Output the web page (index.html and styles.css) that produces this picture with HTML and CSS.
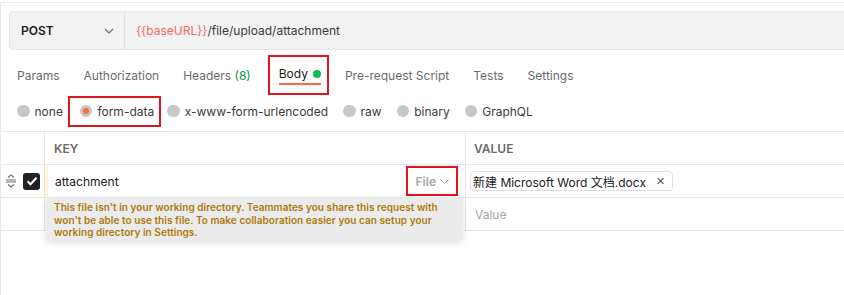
FILE: index.html
```html
<!DOCTYPE html>
<html>
<head>
	<meta charset="utf-8">
	<title>Request</title>
	<link rel="stylesheet" href="styles.css">
</head>
<body>
	<div class="app">
		<div class="url-bar">
			<div class="method">
				<span>POST</span>
				<svg class="chev" width="10" height="6" viewBox="0 0 10 6"><path d="M1 1l4 4 4-4" fill="none" stroke="#6b6b6b" stroke-width="1.1"/></svg>
			</div>
			<div class="url"><span class="var">{{baseURL}}</span>/file/upload/attachment</div>
		</div>

		<div class="tabs">
			<span class="tab">Params</span>
			<span class="tab">Authorization</span>
			<span class="tab">Headers <span class="count">(8)</span></span>
			<span class="tab tab-body marked">Body <i class="dot"></i></span>
			<span class="tab">Pre-request Script</span>
			<span class="tab">Tests</span>
			<span class="tab">Settings</span>
		</div>

		<div class="body-types">
			<label class="radio"><i class="circle"></i>none</label>
			<label class="radio selected marked"><i class="circle"></i>form-data</label>
			<label class="radio"><i class="circle"></i>x-www-form-urlencoded</label>
			<label class="radio"><i class="circle"></i>raw</label>
			<label class="radio"><i class="circle"></i>binary</label>
			<label class="radio"><i class="circle"></i>GraphQL</label>
		</div>

		<div class="table">
			<div class="row head">
				<div class="cell c-side"></div>
				<div class="cell c-key">KEY</div>
				<div class="cell c-val">VALUE</div>
			</div>
			<div class="row">
				<div class="cell c-side">
					<svg class="handle" width="12" height="14" viewBox="0 0 12 14"><path d="M3 3.5l3-2.5 3 2.5M1 6h10M1 8h10M3 10.5l3 2.5 3-2.5" fill="none" stroke="#6b6b6b" stroke-width="1.1"/></svg>
					<span class="check"><svg width="12" height="10" viewBox="0 0 12 10"><path d="M1.5 5.2l3 3 6-6.5" fill="none" stroke="#fff" stroke-width="2"/></svg></span>
				</div>
				<div class="cell c-key key-edit">
					<span class="key-name">attachment</span>
					<span class="type-select marked">File <svg width="9" height="5" viewBox="0 0 9 5"><path d="M.5.5l4 4 4-4" fill="none" stroke="#a6a6a6" stroke-width="1"/></svg></span>
				</div>
				<div class="cell c-val">
					<span class="chip">新建 Microsoft Word 文档.docx <span class="close">✕</span></span>
				</div>
			</div>
			<div class="row">
				<div class="cell c-side"></div>
				<div class="cell c-key"></div>
				<div class="cell c-val placeholder">Value</div>
			</div>
			<div class="tooltip">This file isn't in your working directory. Teammates you share this request with<br>won't be able to use this file. To make collaboration easier you can setup your<br>working directory in Settings.</div>
		</div>
	</div>
</body>
</html>
```

FILE: styles.css
```css
* {
	margin: 0;
	padding: 0;
	box-sizing: border-box;
}
body {
	font-family: Inter, 'Liberation Sans', sans-serif;
	font-size: 12px;
	color: #212121;
	background: #fff;
}
.app {
	height: 295px;
	margin-top: 2px;
	border-top: 1px solid #ededed;
	border-left: 1px solid #e6e6e6;
}
.marked {
	outline: 2px solid #e3141d;
}
.url-bar {
	display: flex;
	height: 39px;
	margin: 8px 0 0 8px;
	background: #f2f2f2;
	border: 1px solid #e6e6e6;
	border-right: 0;
	border-radius: 4px 0 0 4px;
}
.method {
	display: flex;
	align-items: center;
	justify-content: space-between;
	width: 115px;
	padding: 0 10px 0 11px;
	border-right: 1px solid #e0e0e0;
	font-weight: 600;
}
.url {
	display: flex;
	align-items: center;
	padding-left: 11px;
	color: #3b3b3b;
}
.var {
	color: #f26a5c;
}
.tabs {
	display: flex;
	align-items: center;
	gap: 24px;
	height: 46px;
	padding: 4px 0 0 16px;
}
.tab {
	color: #6b6b6b;
	white-space: nowrap;
}
.count {
	color: #0a9a45;
}
.tab-body {
	position: relative;
	display: flex;
	align-items: center;
	gap: 5px;
	padding: 9px 6px 12px 9px;
	margin: 0 -6px 0 -5px;
	color: #212121;
}
.tab-body::after {
	content: "";
	position: absolute;
	left: 9px;
	right: 6px;
	bottom: 8px;
	height: 2px;
	background: #ff6c37;
}
.dot {
	width: 8px;
	height: 8px;
	border-radius: 50%;
	background: #0cbb52;
}
.body-types {
	display: flex;
	align-items: center;
	gap: 15px;
	height: 35px;
	padding-left: 16px;
	padding-bottom: 5px;
}
.radio {
	display: flex;
	align-items: center;
	gap: 5px;
	color: #3b3b3b;
	white-space: nowrap;
}
.circle {
	width: 12.5px;
	height: 12.5px;
	border-radius: 50%;
	background: #c7c7c7;
}
.selected {
	padding: 6px 5px 6px 10px;
	margin: 0 -7px 0 -8px;
}
.selected .circle {
	border: 3px solid #c7c7c7;
	background: #ff6c37;
}
.table {
	position: relative;
	border-top: 1px solid #e6e6e6;
}
.row {
	display: flex;
	height: 33px;
	border-bottom: 1px solid #e6e6e6;
}
.cell {
	display: flex;
	align-items: center;
}
.c-side {
	width: 44px;
	gap: 6px;
	padding-left: 4px;
	border-right: 1px solid #e6e6e6;
}
.c-key {
	width: 421px;
	padding-left: 9px;
	border-right: 1px solid #e6e6e6;
}
.c-val {
	flex: 1;
	padding-left: 8px;
}
.head .cell {
	font-size: 12px;
	font-weight: 600;
	color: #6b6b6b;
}
.check {
	display: flex;
	align-items: center;
	justify-content: center;
	width: 17px;
	height: 17px;
	border-radius: 3px;
	background: #212121;
}
.key-edit {
	justify-content: space-between;
	padding-right: 9px;
	box-shadow: inset 3px 0 0 #fff6d6;
}
.key-name {
	padding-left: 1px;
}
.type-select {
	display: flex;
	align-items: center;
	gap: 4px;
	height: 26px;
	padding: 0 7px 0 8px;
	color: #a6a6a6;
	font-weight: 600;
}
.c-val .chip {
	display: flex;
	align-items: center;
	gap: 10px;
	height: 20px;
	margin-left: -4px;
	padding: 0 7px 0 2px;
	border: 1px solid #e0e0e0;
	border-radius: 4px;
	font-family: Inter, 'Noto Sans CJK SC', sans-serif;
	color: #212121;
}
.close {
	font-size: 11px;
	color: #555;
}
.placeholder {
	padding-left: 9px;
	color: #a6a6a6;
}
.tooltip {
	position: absolute;
	top: 65px;
	left: 45px;
	width: 417px;
	height: 44px;
	padding: 4px 8px;
	background: #ebebeb;
	border-radius: 4px;
	box-shadow: 0 2px 6px rgba(0, 0, 0, 0.12);
	font-size: 10px;
	font-weight: 600;
	line-height: 12.5px;
	letter-spacing: 0.05px;
	white-space: nowrap;
	color: #ae7a0c;
}
```
